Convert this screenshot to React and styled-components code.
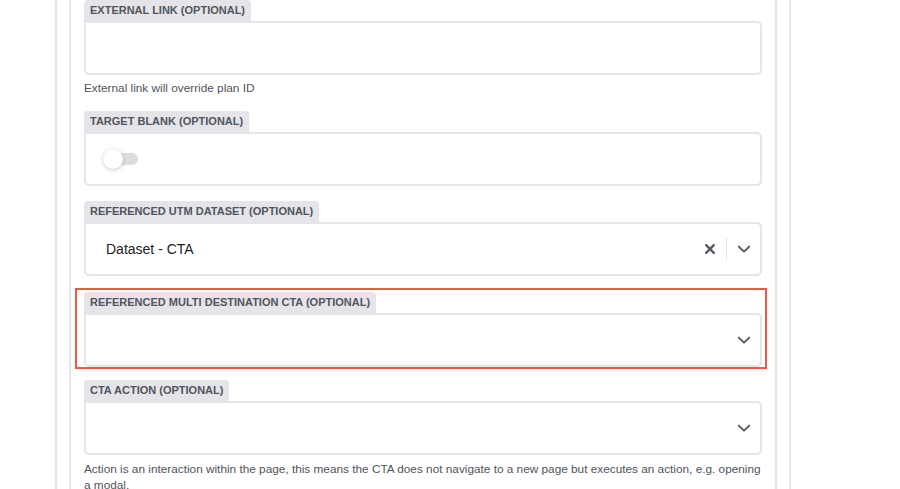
import React from 'react';
import styled, { createGlobalStyle } from 'styled-components';

const GlobalStyle = createGlobalStyle`
  body {
    margin: 0;
    background: #fff;
    font-family: "Liberation Sans", Arial, sans-serif;
  }
`;

const OuterPanel = styled.div`
  width: 736px;
  box-sizing: border-box;
  margin-left: 55px;
  height: 489px;
  overflow: hidden;
  padding: 0 12px;
  border-left: 2px solid #e6e6ea;
  border-right: 2px solid #e6e6ea;
`;

const InnerPanel = styled.div`
  height: 100%;
  padding: 0 13px;
  border-left: 2px solid #e6e6ea;
  border-right: 2px solid #e6e6ea;
`;

const Field = styled.div`
  margin-bottom: 15px;
`;

const Highlight = styled.div`
  border: 2px solid #ea5b46;
  padding: 2px 3px 0 7px;
  margin: -3px -5px 11px -9px;
`;

const Label = styled.div`
  display: inline-block;
  vertical-align: top;
  height: 21px;
  line-height: 21px;
  padding: 0 6px;
  background: #e4e4e9;
  color: #51555e;
  font-size: 11px;
  font-weight: 700;
  border-radius: 4px 4px 0 0;
`;

const Box = styled.div`
  box-sizing: border-box;
  height: 54px;
  border: 2px solid #e4e4e9;
  border-radius: 0 5px 5px 5px;
  background: #fff;
  display: flex;
  align-items: center;
  padding-left: ${p => p.$pad || 0}px;
`;

const Help = styled.div`
  margin-top: ${p => p.$top || 5}px;
  font-size: 11.8px;
  line-height: 16px;
  color: #4f535b;
`;

const Switch = styled.div`
  position: relative;
  width: 35px;
  height: 20px;
  display: flex;
  align-items: center;
`;

const Track = styled.div`
  margin-left: 4px;
  width: 31px;
  height: 12px;
  border-radius: 6px;
  background: #dcdce1;
`;

const Knob = styled.div`
  position: absolute;
  left: 0;
  top: 0;
  width: 20px;
  height: 20px;
  border-radius: 50%;
  background: #fff;
  box-shadow: 0 1px 4px rgba(0, 0, 0, 0.22);
`;

const Value = styled.div`
  flex: 1;
  font-size: 14px;
  color: #222;
`;

const Indicators = styled.div`
  margin-left: auto;
  display: flex;
  align-items: stretch;
  align-self: stretch;
`;

const IconCell = styled.div`
  width: 33px;
  display: flex;
  align-items: center;
  justify-content: center;
  color: #575b63;
`;

const Separator = styled.div`
  width: 1px;
  margin: 14px 0;
  background: #e4e4e9;
`;

const Chevron = () => (
  <svg width="20" height="20" viewBox="0 0 20 20" fill="none">
    <path d="M4.8 7.6 L10 12.6 L15.2 7.6" stroke="currentColor" strokeWidth="2" strokeLinecap="round" strokeLinejoin="round" />
  </svg>
);

const Cross = () => (
  <svg width="20" height="20" viewBox="0 0 20 20" fill="none">
    <path d="M6.2 6.2 L13.8 13.8 M13.8 6.2 L6.2 13.8" stroke="currentColor" strokeWidth="2.4" strokeLinecap="round" />
  </svg>
);

const Select = ({ value }) => (
  <Box $pad={20}>
    <Value>{value}</Value>
    <Indicators>
      {value && (
        <>
          <IconCell><Cross /></IconCell>
          <Separator />
        </>
      )}
      <IconCell><Chevron /></IconCell>
    </Indicators>
  </Box>
);

export default function App() {
  return (
    <>
      <GlobalStyle />
      <OuterPanel>
        <InnerPanel>
          <Field>
            <Label>EXTERNAL LINK (OPTIONAL)</Label>
            <Box />
            <Help>External link will override plan ID</Help>
          </Field>
          <Field>
            <Label>TARGET BLANK (OPTIONAL)</Label>
            <Box $pad={17}>
              <Switch>
                <Track />
                <Knob />
              </Switch>
            </Box>
          </Field>
          <Field>
            <Label>REFERENCED UTM DATASET (OPTIONAL)</Label>
            <Select value="Dataset - CTA" />
          </Field>
          <Highlight>
            <Label>REFERENCED MULTI DESTINATION CTA (OPTIONAL)</Label>
            <Select />
          </Highlight>
          <Field>
            <Label>CTA ACTION (OPTIONAL)</Label>
            <Select />
            <Help $top={6}>
              Action is an interaction within the page, this means the CTA does not navigate to a new page but executes an action, e.g. opening a modal.
            </Help>
          </Field>
        </InnerPanel>
      </OuterPanel>
    </>
  );
}
